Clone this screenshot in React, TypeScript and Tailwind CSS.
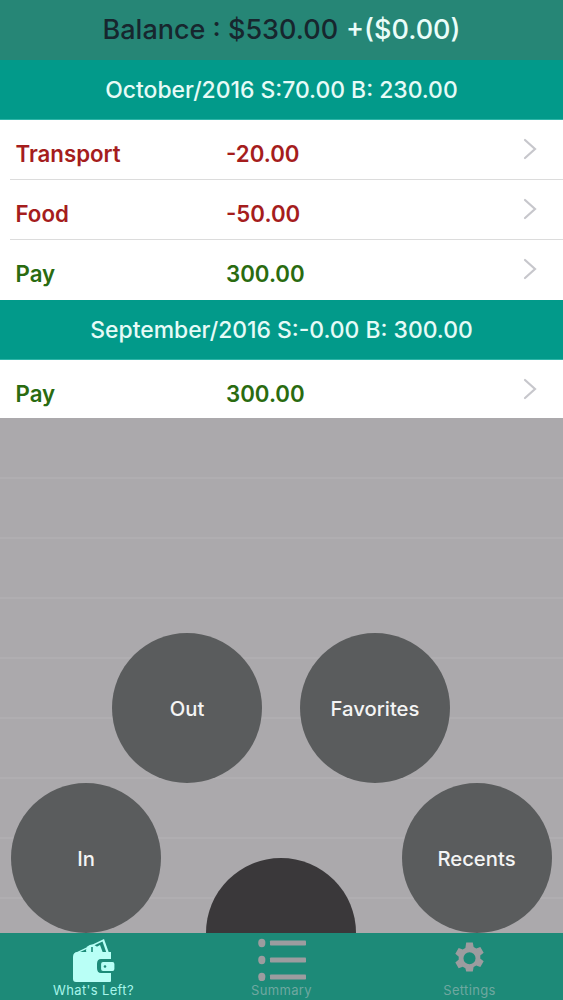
import React from "react";

const F = "font-['Inter','Liberation_Sans',sans-serif]";

function Section({ children }: { children: React.ReactNode }) {
  return (
    <div className="h-[60px] shrink-0 flex items-center justify-center pt-[2px] bg-[#029a8a] border-b border-[#2fb5a8] text-[#e6fbf7] text-[22.9px] font-medium">
      {children}
    </div>
  );
}

function Chevron() {
  return (
    <svg width="14" height="22" viewBox="0 0 14 22" className="absolute right-[26px] top-[18px]" fill="none" stroke="#c7c7cc" strokeWidth="2.2" strokeLinecap="round">
      <path d="M2 2 L12 11 L2 20" />
    </svg>
  );
}

function Row({ name, value, color, last }: { name: string; value: string; color: string; last?: boolean }) {
  return (
    <div className="relative h-[60px] shrink-0 bg-white pl-[10px]">
      <div className={`h-full flex items-center pl-[5.5px] pt-[8px] text-[22.25px] font-semibold ${last ? "" : "border-b border-[#dcdcdc]"} ${color}`}>
        <span className="w-[210.5px]">{name}</span>
        <span>{value}</span>
      </div>
      <Chevron />
    </div>
  );
}

function Circle({ className, label }: { className: string; label?: string }) {
  return (
    <div className={`absolute w-[150px] h-[150px] rounded-full flex items-center justify-center pt-[3px] text-[#f4f4f4] text-[20.25px] font-medium ${className}`}>
      {label}
    </div>
  );
}

function WalletIcon() {
  return (
    <svg width="44" height="46" viewBox="0 0 44 46" fill="#b9fff6">
      <path d="M3 15 L32 1 L37 15 Z" />
      <path d="M6 15 L30.5 3.5 L34.5 15 Z" fill="#1d8a78" />
      <path d="M14 15 L28 7 L31 15 Z" />
      <circle cx="20" cy="12.5" r="6" />
      <rect x="19.2" y="9" width="1.6" height="6" fill="#1d8a78" />
      <path d="M1 19 Q1 14 6 14 L39 14 L39 21 L29 21 Q25 21 25 26 L25 30 Q25 35 29 35 L39 35 L39 43 Q39 44 38 44 L4 44 Q1 44 1 41 Z" />
      <rect x="28.5" y="23.5" width="14.5" height="10" rx="2.5" stroke="#1d8a78" strokeWidth="1.2" />
      <circle cx="33" cy="28.5" r="1.3" fill="#1d8a78" />
    </svg>
  );
}

function ListIcon() {
  return (
    <svg width="48" height="44" viewBox="0 0 48 44" fill="#9c9c9f">
      <ellipse cx="3.8" cy="6" rx="3.6" ry="4.2" />
      <rect x="12" y="3.5" width="36" height="5" rx="0.8" />
      <ellipse cx="3.8" cy="23" rx="3.6" ry="4.2" />
      <rect x="12" y="20.5" width="36" height="5" rx="0.8" />
      <ellipse cx="3.8" cy="40" rx="3.6" ry="4.2" />
      <rect x="12" y="37.5" width="36" height="5" rx="0.8" />
    </svg>
  );
}

function GearIcon() {
  return (
    <svg width="33" height="34" viewBox="0 0 24 24" fill="#9c9c9f">
      <path
        fillRule="evenodd"
        d="M9.6 0h4.8l.6 3.2c.7.3 1.3.6 1.9 1.1l3-1.1 2.4 4.2-2.5 2.1c.1.7.1 1.4 0 2.1l2.5 2.1-2.4 4.2-3-1.1c-.6.5-1.2.8-1.9 1.1l-.6 3.2H9.6L9 18.7c-.7-.3-1.3-.6-1.9-1.1l-3 1.1-2.4-4.2 2.5-2.1c-.1-.7-.1-1.4 0-2.1L1.7 8.2l2.4-4.2 3 1.1c.6-.5 1.2-.8 1.9-1.1L9.6 0ZM12 7a4.4 4.4 0 1 0 0 8.8A4.4 4.4 0 0 0 12 7Z"
      />
    </svg>
  );
}

function Tab({ icon, label, color, iconClass }: { icon: React.ReactNode; label: string; color: string; iconClass: string }) {
  return (
    <div className="flex-1 flex flex-col items-center">
      <div className={`h-[48px] flex items-center justify-center ${iconClass}`}>{icon}</div>
      <span className={`text-[13px] leading-[18px] tracking-[0.35px] ${color}`}>{label}</span>
    </div>
  );
}

export default function App() {
  return (
    <div className={`${F} w-[563px] h-[1000px] flex flex-col overflow-hidden bg-white`}>
      <div className="h-[60px] shrink-0 flex items-center justify-center pt-[1px] bg-[#268676] text-[27px] font-medium gap-[8px]">
        <span className="text-[#17262e]">Balance : $530.00</span>
        <span className="text-[#eafdf9]">+($0.00)</span>
      </div>
      <Section>October/2016 S:70.00 B: 230.00</Section>
      <Row name="Transport" value="-20.00" color="text-[#a51d1d]" />
      <Row name="Food" value="-50.00" color="text-[#a51d1d]" />
      <Row name="Pay" value="300.00" color="text-[#2a6b10]" last />
      <Section>September/2016 S:-0.00 B: 300.00</Section>
      <Row name="Pay" value="300.00" color="text-[#2a6b10]" last />

      <div className="relative flex-1 -mt-[2px] pt-[1px] overflow-hidden bg-[#aba9ac]">
        {Array.from({ length: 8 }).map((_, i) => (
          <div key={i} className="h-[60px] border-b-2 border-[#b0aeb1]" />
        ))}
        <Circle className="left-[112px] top-[215px] bg-[#5a5c5d]" label="Out" />
        <Circle className="left-[300px] top-[215px] bg-[#5a5c5d]" label="Favorites" />
        <Circle className="left-[11px] top-[365px] bg-[#5a5c5d]" label="In" />
        <Circle className="left-[401.5px] top-[365px] bg-[#5a5c5d]" label="Recents" />
        <Circle className="left-[206px] top-[440px] bg-[#3a383a]" />
      </div>

      <div className="h-[67px] shrink-0 flex bg-[#1d8a78]">
        <div className="w-[187px] flex">
          <Tab icon={<WalletIcon />} label="What's Left?" color="text-[#a8f5ea]" iconClass="pt-[7px]" />
        </div>
        <div className="w-[189px] flex">
          <Tab icon={<ListIcon />} label="Summary" color="text-[#6fa8a0]" iconClass="pt-[3px]" />
        </div>
        <div className="w-[187px] flex">
          <Tab icon={<GearIcon />} label="Settings" color="text-[#6fa8a0]" iconClass="pt-[4px]" />
        </div>
      </div>
    </div>
  );
}
